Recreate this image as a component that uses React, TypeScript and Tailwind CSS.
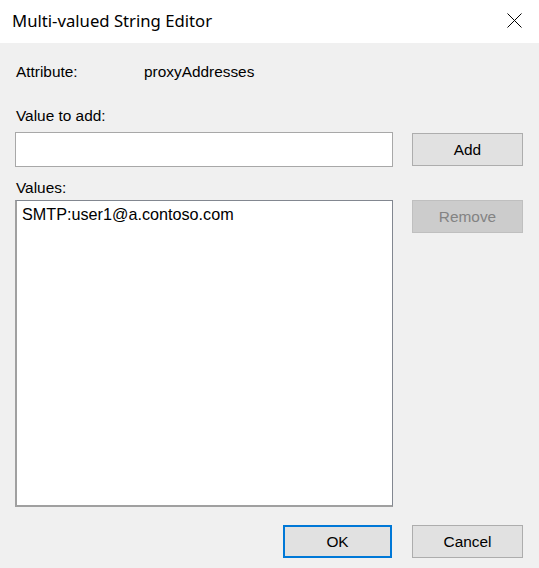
import React, { useState } from 'react';

const fontBody = "font-['Liberation_Sans',Arial,sans-serif]";

const App: React.FC = () => {
  const [value, setValue] = useState('');
  const [values] = useState<string[]>(['SMTP:user1@a.contoso.com']);

  return (
    <div className="w-[539px] h-[568px] bg-[#f0f0f0] flex flex-col overflow-hidden">
      {/* Title bar */}
      <div className="h-[43px] bg-white flex items-center justify-between pl-3 pr-[17px] shrink-0">
        <span className="font-['Noto_Sans',sans-serif] text-[16.7px] text-black leading-none pb-px">
          Multi-valued String Editor
        </span>
        <svg width="15" height="15" viewBox="0 0 15 15" className="mt-[-2px]">
          <path d="M0.5 0.5 L14.5 14.5 M14.5 0.5 L0.5 14.5" stroke="#000" strokeWidth="1" fill="none" />
        </svg>
      </div>

      {/* Body */}
      <div className={`flex-1 flex flex-col px-[15px] ${fontBody} text-[15.4px] leading-[18px] text-black`}>
        <div className="flex mt-5 pl-px">
          <span className="w-[128px]">Attribute:</span>
          <span>proxyAddresses</span>
        </div>

        <div className="mt-[26px] pl-px">Value to add:</div>

        <div className="flex items-center gap-[19px] mt-[7px]">
          <input
            value={value}
            onChange={(e) => setValue(e.target.value)}
            className="w-[378px] h-[35px] bg-white border border-[#a8a8a8] px-1 outline-none"
          />
          <button className="w-[111px] h-[33px] bg-[#e1e1e1] border border-[#adadad]">Add</button>
        </div>

        <div className="mt-[12px] pl-px">Values:</div>

        <div className="flex items-start gap-[19px] mt-[3px]">
          <div className="w-[378px] h-[307px] bg-white border border-[#828790] border-b-2 border-l-2 border-b-[#a0a0a0] border-l-[#a0a0a0] pt-[4px] pl-[5px] text-[16.2px]">
            {values.map((v) => (
              <div key={v}>{v}</div>
            ))}
          </div>
          <button
            disabled
            className="w-[111px] h-[33px] bg-[#cccccc] border border-[#bfbfbf] text-[#838383]"
          >
            Remove
          </button>
        </div>

        <div className="flex justify-end gap-[20px] mt-[18px] pr-px">
          <button className="w-[109px] h-[33px] bg-[#e1e1e1] border-2 border-[#0078d7]">OK</button>
          <button className="w-[111px] h-[33px] bg-[#e1e1e1] border border-[#adadad]">Cancel</button>
        </div>
      </div>
    </div>
  );
};

export default App;
